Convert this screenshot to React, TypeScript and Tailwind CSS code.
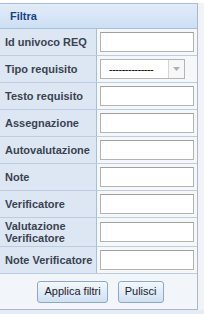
import React from "react";

const rows: { label: string; kind: "text" | "select"; tall?: boolean }[] = [
  { label: "Id univoco REQ", kind: "text" },
  { label: "Tipo requisito", kind: "select" },
  { label: "Testo requisito", kind: "text" },
  { label: "Assegnazione", kind: "text" },
  { label: "Autovalutazione", kind: "text" },
  { label: "Note", kind: "text" },
  { label: "Verificatore", kind: "text" },
  { label: "Valutazione Verificatore", kind: "text", tall: true },
  { label: "Note Verificatore", kind: "text" },
];

export default function App() {
  return (
    <div
      className="w-[204px] h-[314px] bg-[#e6ecf4] flex flex-col overflow-hidden"
      style={{ fontFamily: '"Liberation Sans", Arial, sans-serif' }}
    >
      <div className="h-[3px] bg-white" />
      <div className="flex">
        <div className="w-[198px] border-r border-[#a9b8ca] bg-white flex flex-col">
          {/* Header */}
          <div className="h-[26px] border-t border-b border-[#a7bfdc] bg-gradient-to-b from-[#e2ecf8] to-[#cddff4] flex items-center px-[10px]">
            <span className="text-[11px] font-bold text-[#15428b]">Filtra</span>
          </div>

          {/* Filter rows */}
          {rows.map((r) => (
            <div
              key={r.label}
              className={`flex border-b border-[#bccde1] ${r.tall ? "h-[29px]" : "h-[27px]"}`}
            >
              <div className="w-[97px] shrink-0 bg-[#dde7f4] border-r border-[#a9bfd9] flex items-center pl-[5px]">
                <span
                  className={`text-[11px] leading-[12px] font-bold text-[#3a4350] ${r.tall ? "w-[70px]" : "whitespace-nowrap"}`}
                >
                  {r.label}
                </span>
              </div>
              <div className="flex-1 bg-[#f6f7f9] flex items-center pl-[3px]">
                {r.kind === "text" ? (
                  <div className="w-[94px] h-[20px] bg-white border border-[#b4b4b4] border-t-[#a0a0a0]" />
                ) : (
                  <div className="w-[85px] h-[20px] bg-white border border-[#b4b4b4] flex">
                    <div className="flex-1 flex items-center pl-[8px] text-[11px] leading-none text-black tracking-[-0.5px]">
                      --------------
                    </div>
                    <div className="w-[16px] border-l border-[#d4d4d4] bg-[#f7f7f7] flex items-center justify-center">
                      <svg width="7" height="4" viewBox="0 0 7 4">
                        <path d="M0 0 L7 0 L3.5 4 Z" fill="#a8b0b8" />
                      </svg>
                    </div>
                  </div>
                )}
              </div>
            </div>
          ))}

          {/* Buttons */}
          <div className="h-[36px] bg-[#f2f6fb] border-b border-[#a9b8ca] flex items-center justify-center gap-[10px] pl-[4px]">
            <button className="h-[22px] px-[6px] rounded-[3px] border border-[#8ea8c8] bg-gradient-to-b from-[#f3f8fe] to-[#cfe0f4] text-[11px] text-[#222]">
              Applica filtri
            </button>
            <button className="h-[22px] px-[6px] rounded-[3px] border border-[#8ea8c8] bg-gradient-to-b from-[#f3f8fe] to-[#cfe0f4] text-[11px] text-[#222]">
              Pulisci
            </button>
          </div>
        </div>
        <div className="flex-1 bg-[#f1f3f6]" />
      </div>
    </div>
  );
}
